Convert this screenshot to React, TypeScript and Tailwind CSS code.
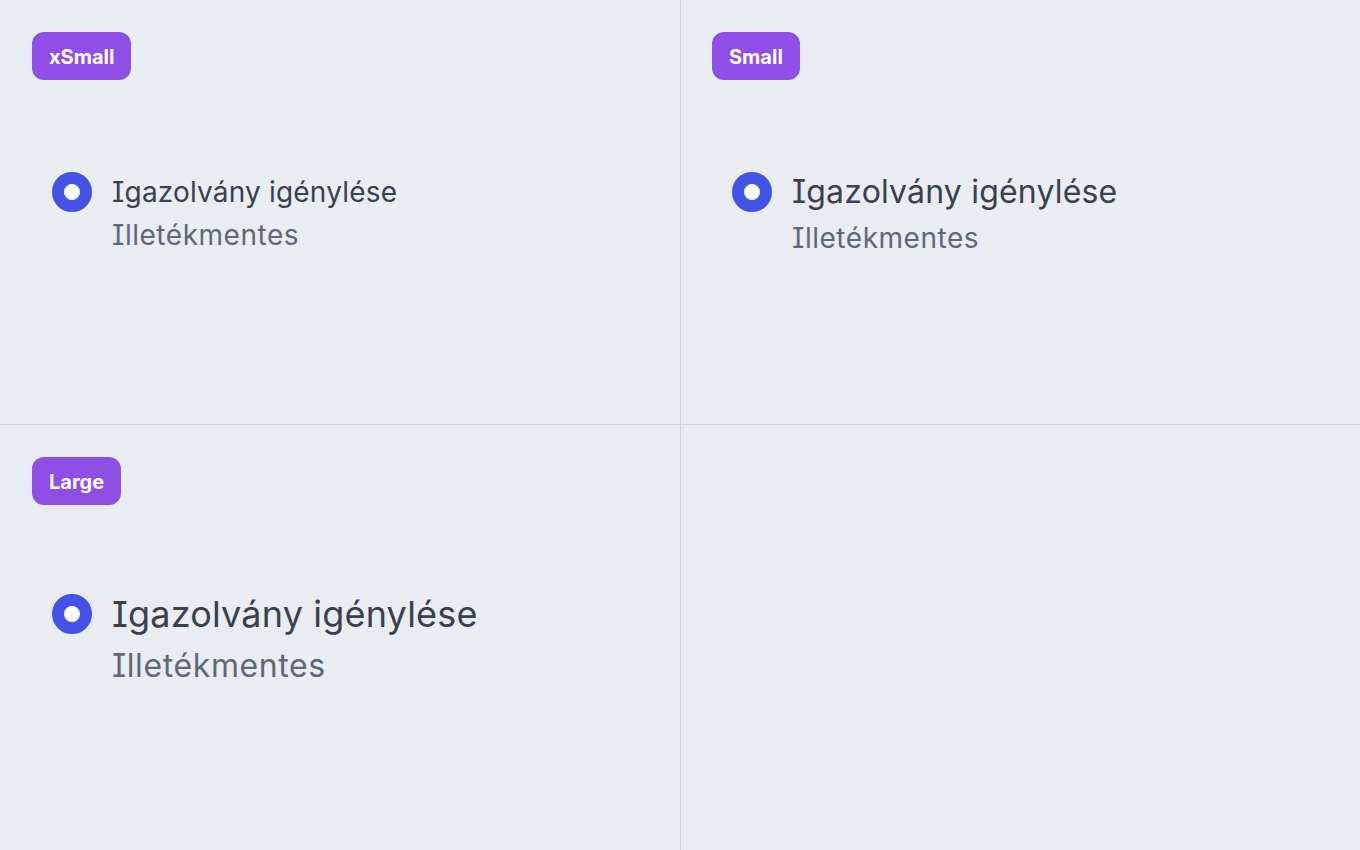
import React from 'react';

type Size = 'xs' | 'sm' | 'lg';

const sizes = {
  xs: { top: 'mt-[92px]', title: 'text-[28px] leading-10', sub: 'mt-[3px] text-[28px] leading-10' },
  sm: { top: 'mt-[90px]', title: 'text-[32px] leading-[44px]', sub: 'mt-[4px] text-[28px] leading-10' },
  lg: { top: 'mt-[85px]', title: 'text-[36px] leading-[48px]', sub: 'mt-[6px] text-[32px] leading-[44px]' },
};

function Badge({ label }: { label: string }) {
  return (
    <span className="inline-flex h-12 items-center rounded-xl bg-[#8f4ee6] px-[17px] pt-px text-[20px] font-bold text-white">
      {label}
    </span>
  );
}

function RadioItem({ size }: { size: Size }) {
  const s = sizes[size];
  return (
    <label className={`${s.top} ml-5 grid grid-cols-[40px_1fr] items-center gap-x-5 [font-feature-settings:'cv08']`}>
      <span className="h-10 w-10 rounded-full border-[12px] border-[#4452e8] bg-white" />
      <span className={`${s.title} tracking-[0.18px] text-[#3a404e]`}>Igazolvány igénylése</span>
      <span className={`${s.sub} col-start-2 tracking-[0.019em] text-[#5f6878]`}>Illetékmentes</span>
    </label>
  );
}

function Cell({ label, size, className }: { label?: string; size?: Size; className: string }) {
  return (
    <div className={`flex flex-col items-start p-8 ${className}`}>
      {label && <Badge label={label} />}
      {size && <RadioItem size={size} />}
    </div>
  );
}

export default function App() {
  return (
    <div className="grid h-[850px] w-[1360px] grid-cols-2 grid-rows-2 bg-[#e9ecf1] font-['Inter',sans-serif]">
      <Cell label="xSmall" size="xs" className="border-b border-[#cfd3d9]" />
      <Cell label="Small" size="sm" className="border-b border-l border-[#cfd3d9] pl-[31px]" />
      <Cell label="Large" size="lg" className="" />
      <Cell className="border-l border-[#cfd3d9]" />
    </div>
  );
}
